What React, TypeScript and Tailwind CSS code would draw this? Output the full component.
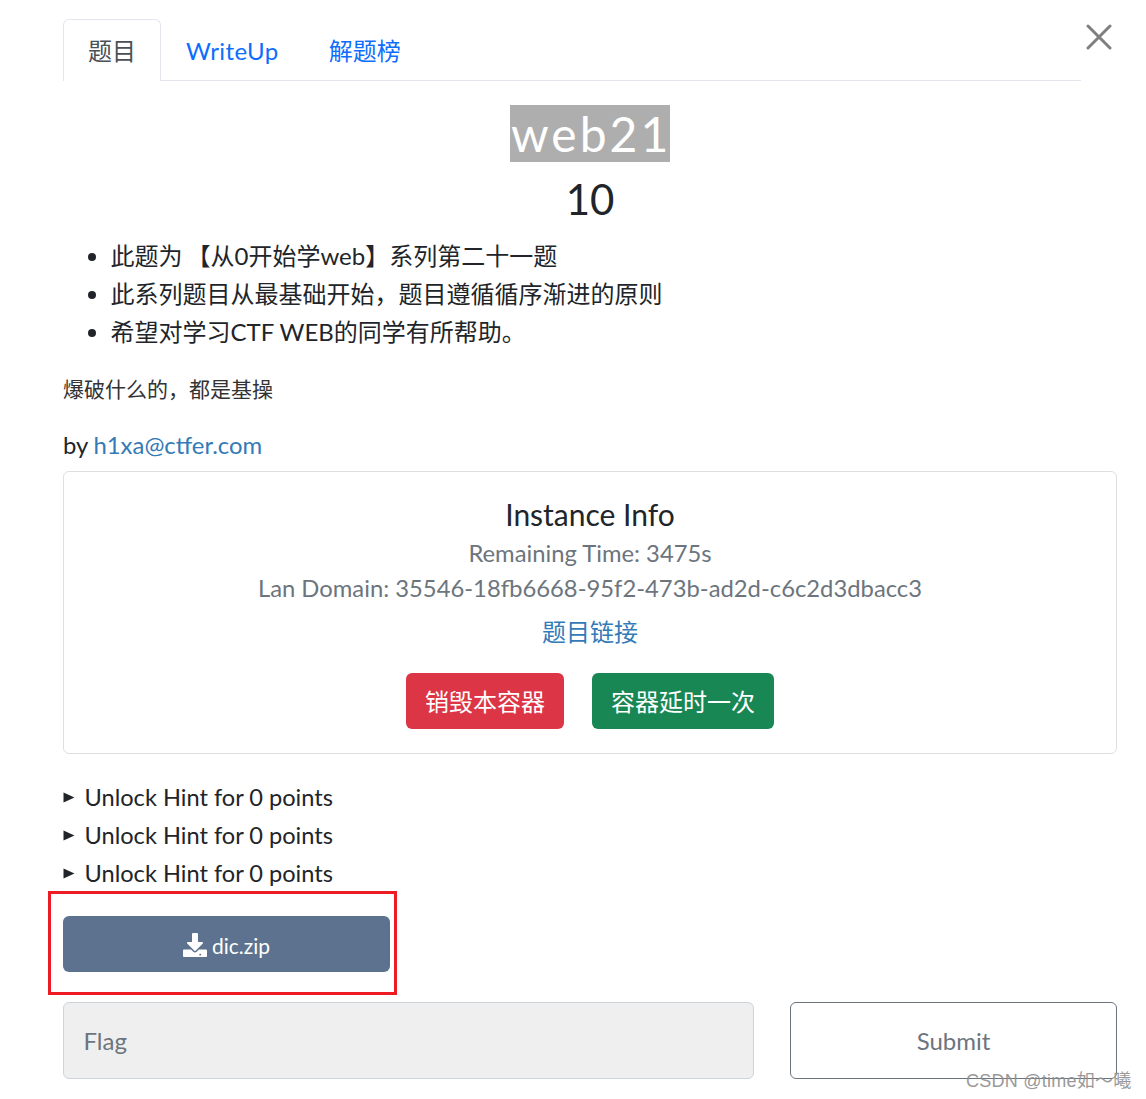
import React from "react";

const font = { fontFamily: '"Lato", "Noto Sans CJK SC", sans-serif' };

function DownloadIcon() {
  return (
    <svg width="24" height="24" viewBox="0 0 512 512" fill="#ffffff" className="mr-[5px] shrink-0 mt-[-2px]">
      <path d="M216 0h80c13.300 0 24 10.700 24 24v168h87.700c17.800 0 26.700 21.500 14.100 34.100L269.700 378.300c-7.500 7.500-19.800 7.500-27.300 0L90.100 226.100c-12.600-12.600-3.700-34.100 14.100-34.100H192V24c0-13.300 10.700-24 24-24zm296 376v112c0 13.300-10.700 24-24 24H24c-13.300 0-24-10.700-24-24V376c0-13.300 10.700-24 24-24h146.700l49 49c20.100 20.100 52.500 20.100 72.600 0l49-49H488c13.300 0 24 10.700 24 24zm-124 88c0-11-9-20-20-20s-20 9-20 20 9 20 20 20 20-9 20-20z" />
    </svg>
  );
}

function Hint() {
  return (
    <div className="flex items-center h-[38px]">
      <svg width="12" height="11" viewBox="0 0 12 11" fill="#212529" className="mr-[10px] shrink-0">
        <path d="M0.500 0.500 L11.500 5.500 L0.500 10.500 Z" />
      </svg>
      <span className="text-[23.6px] pt-[2px] ml-[-0.5px] text-[#212529]">Unlock Hint for 0 points</span>
    </div>
  );
}

export default function App() {
  return (
    <div style={font} className="relative w-[1146px] h-[1099px] bg-white overflow-hidden pl-[63px] pr-[29px] pt-[19px] text-[#212529]">
      <button className="absolute left-[1086px] top-[24px] w-[26px] h-[26px] text-[#7f7f7f]" aria-label="Close">
        <svg viewBox="0 0 26 26" width="26" height="26" fill="none" stroke="currentColor" strokeWidth="3" strokeLinecap="round">
          <path d="M2 2 L24 24 M24 2 L2 24" />
        </svg>
      </button>

      <nav className="flex w-[1018px] h-[62px] border-b border-[#e3e6ec] text-[24px] leading-[36px]">
        <span className="h-[62px] w-[98px] pt-[13px] text-center border border-b-0 border-[#e3e6ec] rounded-t-[6px] bg-white text-[#495057]">题目</span>
        <span className="h-[62px] pl-[25px] pr-[25px] pt-[14px] text-[#0d6efd] tracking-[0.4px]">WriteUp</span>
        <span className="h-[62px] pl-[25px] pr-[25px] pt-[14px] text-[#0d6efd]">解题榜</span>
      </nav>

      <div className="mt-[24px] flex flex-col items-center">
        <h1 className="h-[57px] w-[160px] pl-[1px] bg-[#aeaeae] text-white text-[48px] leading-[57px] tracking-[3px] text-left font-normal whitespace-nowrap">web21</h1>
        <h3 className="mt-[9px] text-[42px] leading-[56px] font-normal text-[#212529]">10</h3>
      </div>

      <ul className="mt-[10px] pl-[47.500px] list-disc text-[24px] leading-[38px]">
        <li>此题为<span className="ml-[4px]">【</span>从0开始学web】系列第二十一题</li>
        <li>此系列题目从最基础开始，题目遵循循序渐进的原则</li>
        <li>希望对学习CTF WEB的同学有所帮助。</li>
      </ul>

      <p className="mt-[19px] h-[36px] text-[21px] leading-[36px] text-[#333333]" style={{ fontFamily: '"Noto Sans CJK SC", serif' }}>爆破什么的，都是基操</p>

      <p className="mt-[21px] text-[23.9px] leading-[36px]">by <span className="ml-[-0.5px] text-[#337ab7]">h1xa@ctfer.com</span></p>

      <div className="mt-[8px] h-[283px] border border-[#dfdfdf] rounded-[6px] flex flex-col items-center pt-[23px]">
        <h4 className="text-[30px] leading-[38px] font-normal text-[#212529]">Instance Info</h4>
        <p className="mt-[3px] text-[23.8px] leading-[35px] text-[#6c757d]">Remaining Time: 3475s</p>
        <p className="text-[23.8px] leading-[35px] text-[#6c757d]">Lan Domain: 35546-18fb6668-95f2-473b-ad2d-c6c2d3dbacc3</p>
        <p className="mt-[8px] text-[24px] leading-[36px] text-[#337ab7]">题目链接</p>
        <div className="mt-[23px] flex gap-[28px]">
          <button className="h-[56px] w-[158px] pt-[2px] rounded-[6px] bg-[#dc3545] text-white text-[24px]">销毁本容器</button>
          <button className="h-[56px] w-[182px] pt-[2px] rounded-[6px] bg-[#198754] text-white text-[24px]">容器延时一次</button>
        </div>
      </div>

      <div className="mt-[24px]">
        <Hint />
        <Hint />
        <Hint />
      </div>

      <div className="relative mt-[24px] w-[327px]">
        <div className="absolute left-[-15px] top-[-25px] w-[349px] h-[104px] border-[3px] border-[#ed1c24] pointer-events-none" />
        <button className="w-[327px] h-[56px] pt-[3px] rounded-[6px] bg-[#5c728e] text-white text-[21px] flex items-center justify-center">
          <DownloadIcon />
          dic.zip
        </button>
      </div>

      <div className="mt-[30px] flex">
        <div className="w-[691px] h-[77px] pt-[1px] rounded-[6px] border border-[#ced4da] bg-[#efefef] flex items-center pl-[19.500px] text-[24px] text-[#6c757d]">Flag</div>
        <button className="ml-[36px] w-[327px] h-[77px] pt-[1px] rounded-[6px] border border-[#6c757d] bg-white text-[24px] text-[#6c757d]">Submit</button>
      </div>

      <span className="absolute left-[966px] top-[1069px] text-[18px] leading-[24px] tracking-[0.25px] text-[#8f8f8f] opacity-90 whitespace-nowrap" style={{ fontFamily: '"Liberation Sans", "Noto Sans CJK SC", sans-serif' }}>CSDN @time如～曦</span>
    </div>
  );
}
